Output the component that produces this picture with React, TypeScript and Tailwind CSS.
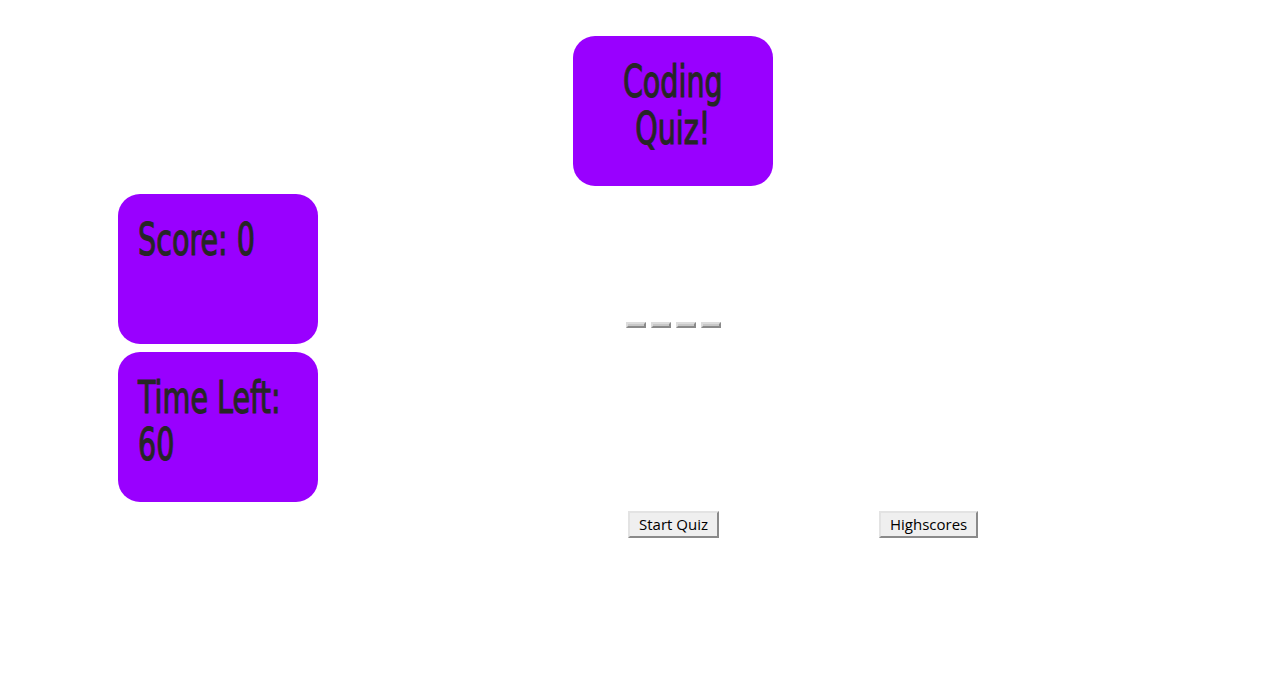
const boxFont = { fontFamily: '"DejaVu Sans", sans-serif' };

function Dash() {
  return (
    <button className="h-[6px] w-5 border-2 border-t-[#dcdcdc] border-l-[#dcdcdc] border-r-[#8a8a8a] border-b-[#8a8a8a] bg-[#c8c8c8] p-0" />
  );
}

function PlainButton({ label }: { label: string }) {
  return (
    <button className="border-2 border-t-[#e3e3e3] border-l-[#e3e3e3] border-r-[#8a8a8a] border-b-[#8a8a8a] bg-[#efefef] px-[9px] py-[2px] font-['Open_Sans',sans-serif] text-[15px] leading-[19px] text-black">
      {label}
    </button>
  );
}

// narrow display lines: condensed look via a horizontal squeeze
function Line({ text, center }: { text: string; center?: boolean }) {
  return (
    <div className={center ? 'flex justify-center' : 'flex'}>
      <span
        className={
          center
            ? 'inline-block origin-center scale-x-[0.65] whitespace-nowrap text-[44px] leading-[47px] text-[#262626] [-webkit-text-stroke:1.2px_#262626]'
            : 'inline-block origin-left scale-x-[0.65] whitespace-nowrap text-[44px] leading-[47px] text-[#262626] [-webkit-text-stroke:1.2px_#262626]'
        }
        style={boxFont}
      >
        {text}
      </span>
    </div>
  );
}

function StatBox({ lines }: { lines: string[] }) {
  return (
    <div className="h-[150px] w-[200px] rounded-[22px] bg-[#9900ff] px-5 pt-[22px]">
      {lines.map((l) => (
        <Line key={l} text={l} />
      ))}
    </div>
  );
}

export default function App() {
  return (
    <div className="min-h-[688px] w-full bg-white pt-[36px]">
      <div className="ml-[573px] h-[150px] w-[200px] rounded-[22px] bg-[#9900ff] pt-[22px]">
        <Line text="Coding" center />
        <Line text="Quiz!" center />
      </div>

      <div className="mt-2 flex">
        <div className="ml-[118px] flex flex-col gap-2">
          <StatBox lines={['Score: 0']} />
          <StatBox lines={['Time Left:', '60']} />
        </div>
        <div className="ml-[308px] mt-[128px] flex h-[6px] gap-[5px]">
          <Dash />
          <Dash />
          <Dash />
          <Dash />
        </div>
      </div>

      <div className="ml-[628px] mt-[9px] flex gap-[160px]">
        <PlainButton label="Start Quiz" />
        <PlainButton label="Highscores" />
      </div>
    </div>
  );
}
